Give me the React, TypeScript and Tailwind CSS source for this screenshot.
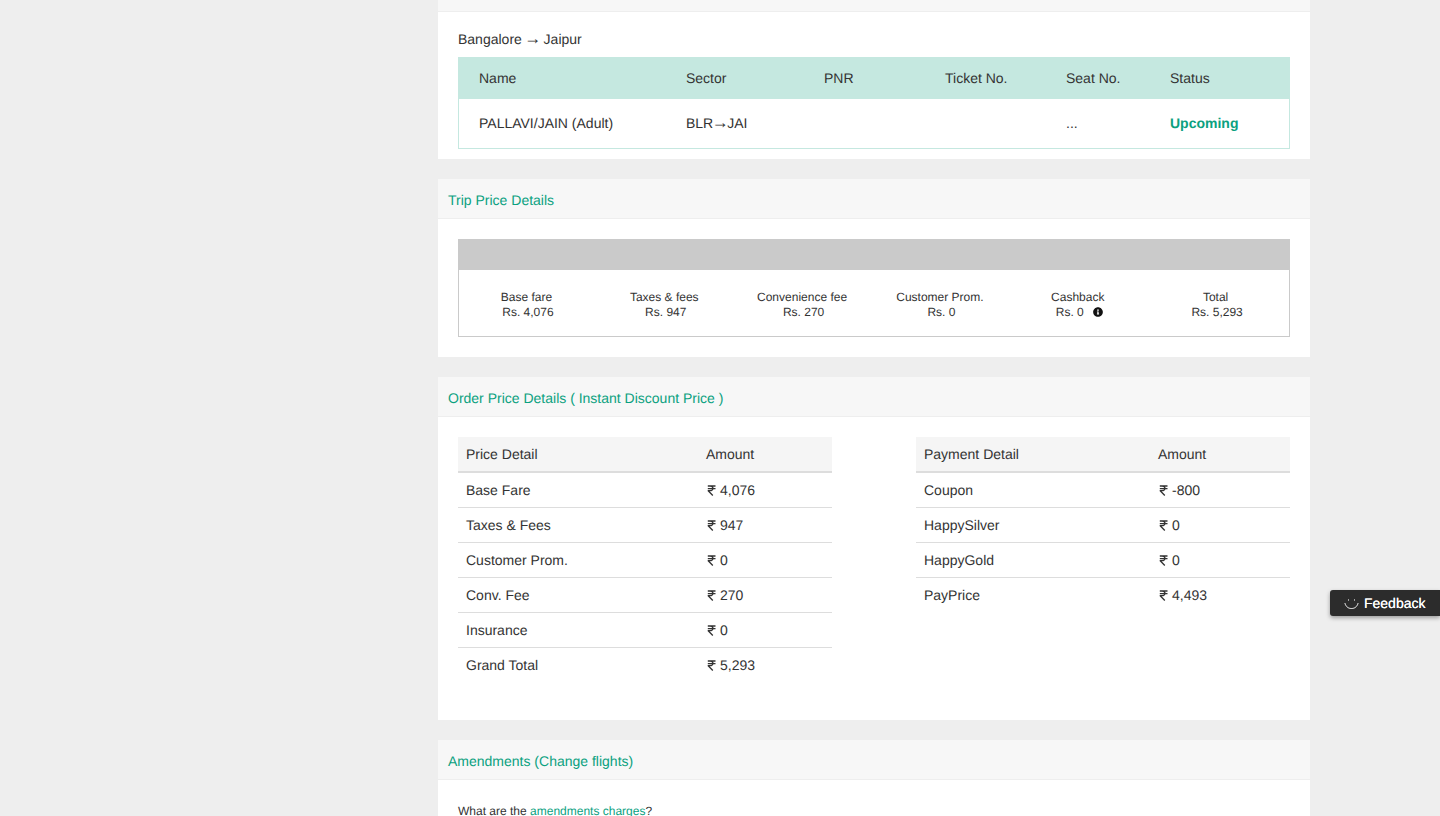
import React from "react";
import { FaInfoCircle } from "react-icons/fa";

function PanelHeader({ title }: { title: string }) {
  return (
    <div className="h-[40px] bg-[#f7f7f7] border-b border-[#eeeeee] px-[10px] pt-[4px] flex items-center text-[14px] text-[#0ba17f]">
      {title}
    </div>
  );
}

const cols = "grid grid-cols-[207px_138px_121px_121px_104px_1fr] px-[21px] items-center";

function RupeeIcon() {
  return (
    <svg className="ml-[1px] mr-[4px]" width="9" height="11" viewBox="0 0 9 11" fill="none">
      <path
        d="M0.800 1H8.500M0.800 3.700H8.500M1 1H3.200C5 1 6 2 6 3.200C6 4.700 4.800 5.700 3 5.700H1.200L5.800 10.500"
        stroke="#333333"
        strokeWidth="1.300"
        strokeLinejoin="round"
      />
    </svg>
  );
}

function Rupee({ v }: { v: string }) {
  return (
    <span className="flex items-center">
      <RupeeIcon />
      {v}
    </span>
  );
}

function Arrow() {
  return <span className="text-[17px] leading-[1px] mx-[-1.5px]">→</span>;
}

const fareCells = [
  ["Base fare", "Rs. 4,076"],
  ["Taxes & fees", "Rs. 947"],
  ["Convenience fee", "Rs. 270"],
  ["Customer Prom.", "Rs. 0"],
  ["Cashback", "Rs. 0"],
  ["Total", "Rs. 5,293"],
];

function PriceTable({
  head,
  rows,
  amountCol,
}: {
  head: string;
  rows: [string, string][];
  amountCol: string;
}) {
  return (
    <div className="w-[374px] text-[14px] text-[#333333]">
      <div className={`${amountCol} h-[36px] bg-[#f5f5f5] border-b-2 border-[#dddddd] items-center`}>
        <div className="pl-2">{head}</div>
        <div className="pl-2">Amount</div>
      </div>
      {rows.map(([a, b], i) => (
        <div
          key={a}
          className={`${amountCol} h-[35px] items-center ${i < rows.length - 1 ? "border-b border-[#dddddd]" : ""}`}
        >
          <div className="pl-2">{a}</div>
          <div className="pl-2">
            <Rupee v={b} />
          </div>
        </div>
      ))}
    </div>
  );
}

export default function App() {
  return (
    <div
      className="relative h-[816px] w-full overflow-hidden bg-[#eeeeee] text-[#333333] [text-rendering:geometricPrecision]"
      style={{ fontFamily: '"Liberation Sans", Arial, sans-serif' }}
    >
      <div className="ml-[438px] w-[872px] flex flex-col gap-5">
        <section className="bg-white h-[159px]">
          <div className="h-[12px] bg-[#f7f7f7] border-b border-[#eeeeee]" />
          <div className="px-5 pt-[19px]">
            <div className="h-[16px] leading-[16px] text-[14px] mb-[10px]">
              Bangalore <Arrow /> Jaipur
            </div>
            <div className="border-x border-b border-[#c5e8e0] text-[14px]">
              <div className={`${cols} h-[42px] bg-[#c5e8e0] -mx-px px-[21px]`}>
                <div>Name</div>
                <div>Sector</div>
                <div>PNR</div>
                <div>Ticket No.</div>
                <div>Seat No.</div>
                <div>Status</div>
              </div>
              <div className={`${cols} h-[49px] -ml-px`}>
                <div>PALLAVI/JAIN (Adult)</div>
                <div>
                  BLR
                  <Arrow />
                  JAI
                </div>
                <div />
                <div />
                <div>...</div>
                <div className="font-bold text-[#0ba17f]">Upcoming</div>
              </div>
            </div>
          </div>
        </section>

        <section className="bg-white h-[178px]">
          <PanelHeader title="Trip Price Details" />
          <div className="px-5 pt-5">
            <div className="border border-[#cacaca] h-[98px]">
              <div className="h-[30px] bg-[#cacaca]" />
              <div className="grid grid-cols-6 pt-[20px] pr-[3px] text-[12px] leading-[15px] text-center">
                {fareCells.map(([a, b]) => (
                  <div key={a}>
                    <div className="pr-[3px]">{a}</div>
                    <div className="flex justify-center items-center">
                      {b}
                      {a === "Cashback" && (
                        <FaInfoCircle className="w-[10px] h-[10px] ml-[9px] mb-[2px] text-[#111111]" />
                      )}
                    </div>
                  </div>
                ))}
              </div>
            </div>
          </div>
        </section>

        <section className="bg-white h-[343px]">
          <PanelHeader title="Order Price Details ( Instant Discount Price )" />
          <div className="px-5 pt-5 flex justify-between">
            <PriceTable
              head="Price Detail"
              amountCol="grid grid-cols-[240px_1fr]"
              rows={[
                ["Base Fare", "4,076"],
                ["Taxes & Fees", "947"],
                ["Customer Prom.", "0"],
                ["Conv. Fee", "270"],
                ["Insurance", "0"],
                ["Grand Total", "5,293"],
              ]}
            />
            <PriceTable
              head="Payment Detail"
              amountCol="grid grid-cols-[234px_1fr]"
              rows={[
                ["Coupon", "-800"],
                ["HappySilver", "0"],
                ["HappyGold", "0"],
                ["PayPrice", "4,493"],
              ]}
            />
          </div>
        </section>

        <section className="bg-white h-[200px]">
          <PanelHeader title="Amendments (Change flights)" />
          <div className="px-5 pt-[24px] text-[12px] leading-[15px]">
            What are the <span className="text-[#0ba17f]">amendments charges</span>?
          </div>
        </section>
      </div>

      <div className="absolute right-0 top-[590px] w-[110px] h-[26px] bg-[#2c2c2c] rounded-l-[3px] shadow-[0_2px_4px_rgba(0,0,0,0.35)] flex items-center text-white text-[14px] font-medium [text-shadow:0_0_0.5px_#ffffff]">
        <svg className="ml-[14px] mr-[5px] mt-[2px]" width="15" height="12" viewBox="0 0 15 12" fill="none">
          <path d="M1 5.5c1 3.5 3.5 5 6.5 5s5.500-1.500 6.500-5" stroke="#ffffff" strokeWidth="1" strokeLinecap="round" />
          <path d="M4.500 1.500v1M10.500 1.500v1" stroke="#ffffff" strokeOpacity="0.6" strokeWidth="1" strokeLinecap="round" />
        </svg>
        Feedback
      </div>
    </div>
  );
}
